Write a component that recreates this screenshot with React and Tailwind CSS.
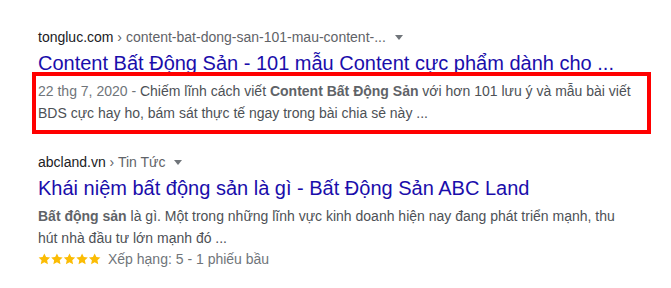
import React from 'react';

const Caret = () => (
    <span className="ml-[9px] inline-block h-0 w-0 border-x-4 border-x-transparent border-t-[5px] border-t-[#70757a]" />
);

const Stars = () => (
    <svg width="63" height="13" viewBox="0 0 120 24.8" className="shrink-0">
        {[0, 1, 2, 3, 4].map((i) => (
            <path
                key={i}
                transform={`translate(${i * 24} 0)`}
                d="M12 .8l3.3 7 7.6.9-5.6 5.2 1.5 7.6L12 17.8l-6.8 3.7L6.7 13.9 1.1 8.7l7.6-.9z"
                fill="#fbbc04"
            />
        ))}
    </svg>
);

const App = () => {
    return (
        <div className="min-h-screen bg-white pl-[38px] pt-[27px] font-['Liberation_Sans',Arial,sans-serif]">
            {/* ket qua 1 */}
            <div className="flex h-5 items-center whitespace-nowrap text-sm leading-5">
                <span className="text-[#202124]">tongluc.com</span>
                <span className="text-[#5f6368]">&nbsp;› content-bat-dong-san-101-mau-content-...</span>
                <Caret />
            </div>
            <div className="mt-[3px] whitespace-nowrap text-xl leading-[26px] text-[#1a0dab]">
                Content Bất Động Sản - 101 mẫu Content cực phẩm dành cho ...
            </div>
            <div className="relative z-10 -ml-[6px] -mt-1 w-[619px] border-4 border-[#ff0000] pb-[6px] pl-[2px] pt-1 text-sm leading-[22px] text-[#4d5156] whitespace-nowrap">
                <span className="text-[#70757a]">22 thg 7, 2020 - </span>
                Chiếm lĩnh cách viết <b className="text-[#5f6368]">Content Bất Động Sản</b> với hơn 101 lưu ý và mẫu bài viết
                <br />
                BDS cực hay ho, bám sát thực tế ngay trong bài chia sẻ này ...
            </div>

            {/* ket qua 2 */}
            <div className="mt-[18px] flex h-5 items-center whitespace-nowrap text-sm leading-5">
                <span className="text-[#202124]">abcland.vn</span>
                <span className="text-[#5f6368]">&nbsp;› Tin Tức</span>
                <Caret />
            </div>
            <div className="mt-[3px] whitespace-nowrap text-xl leading-[26px] text-[#1a0dab]">
                Khái niệm bất động sản là gì - Bất Động Sản ABC Land
            </div>
            <div className="mt-1 whitespace-nowrap text-sm leading-[22px] text-[#4d5156]">
                <b className="text-[#5f6368]">Bất động sản</b> là gì. Một trong những lĩnh vực kinh doanh hiện nay đang phát triển mạnh, thu
                <br />
                hút nhà đầu tư lớn mạnh đó ...
            </div>
            <div className="flex h-5 items-center gap-[7px] whitespace-nowrap text-sm leading-5 text-[#70757a]">
                <Stars />
                <span>Xếp hạng: 5 - 1 phiếu bầu</span>
            </div>
        </div>
    );
};

export default App;
